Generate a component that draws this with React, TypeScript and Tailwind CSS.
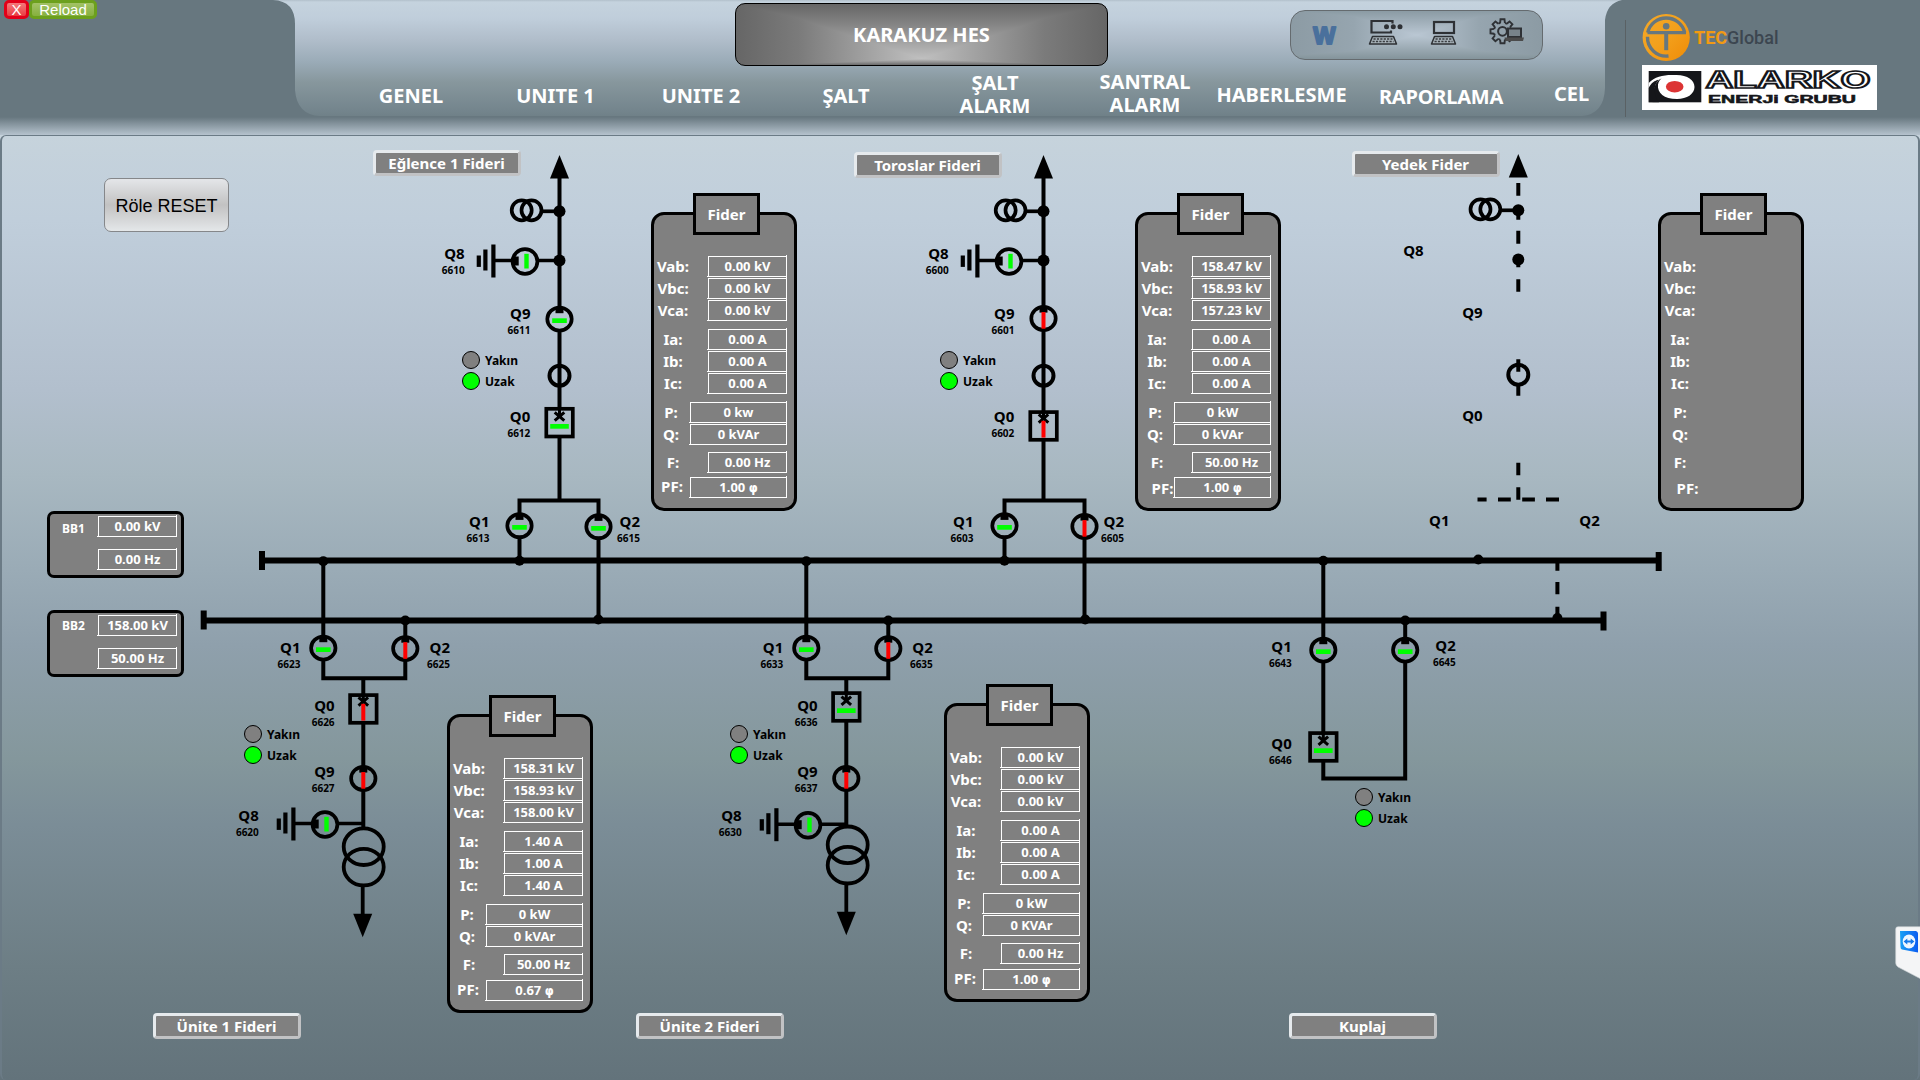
import React from "react";

const NOTO = "font-['Noto_Sans','DejaVu_Sans',sans-serif]";

/* ---------- Header ---------- */

const navItems = [
  { text: ["GENEL"], cls: "ml-[85.5px] w-[100px] mt-[84px]" },
  { text: ["UNITE 1"], cls: "ml-[44.5px] w-[100px] mt-[84px]" },
  { text: ["UNITE 2"], cls: "ml-[45.5px] w-[100px] mt-[84px]" },
  { text: ["ŞALT"], cls: "ml-[45px] w-[100px] mt-[84px]" },
  { text: ["ŞALT", "ALARM"], cls: "ml-[49px] w-[100px] mt-[71px]" },
  { text: ["SANTRAL", "ALARM"], cls: "ml-[50px] w-[100px] mt-[70px]" },
  { text: ["HABERLESME"], cls: "ml-[16.5px] w-[140px] mt-[83px]" },
  { text: ["RAPORLAMA"], cls: "ml-[19.5px] w-[140px] mt-[85px] tracking-[-0.2px]" },
  { text: ["CEL"], cls: "ml-[30.5px] w-[60px] mt-[82px]" },
];

function Keyboard({ x, y, w }: { x: number; y: number; w: number }) {
  return (
    <g>
      <path
        d={`M${x + 3} ${y} H${x + w - 3} L${x + w} ${y + 7.5} H${x} Z`}
        fill="#a9b4bb"
        stroke="#2e3135"
        strokeWidth="1.5"
        strokeLinejoin="round"
      />
      <path
        d={`M${x + 4} ${y + 2.5} H${x + w - 4} M${x + 3} ${y + 5} H${x + w - 3}`}
        stroke="#3a3d41"
        strokeWidth="1.3"
        strokeDasharray="2.2 1.2"
      />
    </g>
  );
}

function ToolbarIcons() {
  const teeth = [0, 45, 90, 135, 180, 225, 270, 315];
  return (
    <svg className="h-[50px] w-[252px]" viewBox="1291 11 252 50">
      <text
        x="1324.4"
        y="43.5"
        textAnchor="middle"
        fontFamily="Liberation Sans, sans-serif"
        fontWeight="700"
        fontSize="23.5"
        fill="#4a709c"
        stroke="#4a709c"
        strokeWidth="2"
        strokeLinejoin="round"
      >
        W
      </text>
      <path d="M1392.5 23.5 V21 H1371.5 V32.5 H1391 V30.5" fill="none" stroke="#2e3135" strokeWidth="2.2" />
      <g fill="#2e3135">
        <circle cx="1386.5" cy="26.8" r="2.5" />
        <circle cx="1393.3" cy="26.8" r="2.5" />
        <circle cx="1400" cy="26.8" r="2.5" />
      </g>
      <Keyboard x={1369.5} y={36.5} w={27} />
      <rect x="1434" y="22" width="20" height="11" fill="none" stroke="#2e3135" strokeWidth="2.2" />
      <Keyboard x={1431.5} y={36.5} w={24} />
      <g transform="translate(1502.5 31.3)">
        {teeth.map((a) => (
          <path key={a} d="M-2.4 -8.3 L-2 -12 H2 L2.4 -8.3" transform={`rotate(${a})`} fill="none" stroke="#2e3135" strokeWidth="1.9" />
        ))}
        <circle r="8.6" fill="none" stroke="#2e3135" strokeWidth="1.9" strokeDasharray="2.2 4.554" strokeDashoffset="-2.277" />
        <circle r="4.4" fill="none" stroke="#2e3135" strokeWidth="2" />
      </g>
      <rect x="1508" y="28.5" width="13" height="8.5" fill="#78838a" stroke="#2e3135" strokeWidth="2" />
      <path d="M1504.5 37.5 H1524 L1523 41 H1506 Z" fill="#4b4b4b" />
    </svg>
  );
}

function TecLogo() {
  return (
    <div className="flex h-[49px] items-center">
      <svg className="h-[49px] w-[49px] shrink-0" viewBox="1641.5 12.8 49 49">
        <defs>
          <linearGradient id="tec" x1="0" y1="0" x2="1" y2="1">
            <stop offset="0" stopColor="#f4a828" />
            <stop offset="0.5" stopColor="#f3a01c" />
            <stop offset="1" stopColor="#ef8b06" />
          </linearGradient>
        </defs>
        <circle cx="1665.7" cy="37.3" r="23.6" fill="url(#tec)" />
        <g fill="none" stroke="#67777f" strokeWidth="3.4">
          <path d="M1647.2 32.4 A19 19 0 0 1 1684.2 32.4" />
          <path d="M1647 36.5 A18.8 18.8 0 0 0 1668 55.8" />
          <path d="M1647 32.4 H1685.5" />
          <path d="M1665.7 32.4 V50" strokeWidth="4" />
        </g>
        <circle cx="1665.7" cy="26" r="3.3" fill="#67777f" />
      </svg>
      <div className="ml-[3px] font-['Roboto',sans-serif] text-[18px] leading-5 whitespace-nowrap">
        <span className="font-bold text-[#f29a13]">TEC</span>
        <span className="font-medium text-[#3c4650]">Global</span>
      </div>
    </div>
  );
}

function AlarkoLogo() {
  return (
    <svg className="h-[45px] w-[235px] bg-white" viewBox="1642 65 235 45">
      <rect x="1648.7" y="71" width="52.6" height="31.3" fill="#15161a" />
      <path
        d="M1648.7 83 C1655 76 1665 74.5 1675 75 C1687 74.5 1694.5 80 1694.5 87 C1694.5 94 1687 99 1677 99 C1664 99 1657 93 1658 84.5 C1658.5 81 1660.5 79 1662 78.2 C1656 80.5 1653 87 1652.5 102.3 L1648.7 102.3 Z"
        fill="#ffffff"
      />
      <path d="M1648.7 88 C1651 83 1655 80.5 1658.5 79.8 C1653.5 86 1653 94 1659 102.3 L1648.7 102.3 Z" fill="#15161a" />
      <ellipse cx="1674.7" cy="86.7" rx="8.8" ry="5.8" fill="#dc3434" />
      <text
        x="1705.5"
        y="87.8"
        textLength="165"
        lengthAdjust="spacingAndGlyphs"
        fontFamily="Liberation Sans, Arial, sans-serif"
        fontWeight="700"
        fontSize="23"
        fill="#ffffff"
        stroke="#15161a"
        strokeWidth="1.7"
      >
        ALARKO
      </text>
      <text
        x="1708"
        y="103.2"
        textLength="148"
        lengthAdjust="spacingAndGlyphs"
        fontFamily="Liberation Sans, Arial, sans-serif"
        fontWeight="700"
        fontSize="10"
        fill="#15161a"
        stroke="#15161a"
        strokeWidth="0.5"
      >
        ENERJi GRUBU
      </text>
    </svg>
  );
}

function Header() {
  return (
    <header className="relative h-[117px] w-full bg-[#67777f]">
      <div
        className={`absolute inset-0 bg-[linear-gradient(#b2c0cb_0px,#c5d3de_2px,#c0cedb_18px,#b0bdca_40px,#9aabb7_62px,#87979d_82px,#74858d_110px,#6f8087_117px)] [clip-path:path('M273_0_Q295_1_295_24_V90_Q297_115_320_116_H1582_Q1604_114_1605_88_V20_Q1607_3_1622_0_Z')]`}
      />
      <div className="relative flex h-full">
        <div className="flex h-[19px] w-[275px] shrink-0 pl-1 font-['Liberation_Sans',Arial,sans-serif] text-[15px] leading-[14px] text-white">
          <button className="h-[19px] w-[25px] rounded-[5px] border-[3px] border-[#e2001a] bg-linear-to-b from-[#f4777b] to-[#e93a42]">X</button>
          <button className="h-[19px] w-[68px] rounded-[5px] border-[3px] border-[#6ca01d] bg-linear-to-b from-[#a3c266] to-[#86b03d]">Reload</button>
        </div>
        <div className="relative w-[1330px] shrink-0">
          <nav className={`flex items-start text-center text-[20px] leading-[23px] font-bold text-white ${NOTO}`}>
            <span className="w-[0.5px] shrink-0" />
            {navItems.map((n, i) => (
              <div key={i} className={`shrink-0 whitespace-nowrap ${n.cls}`}>
                {n.text.map((t, k) => (
                  <div key={k}>{t}</div>
                ))}
              </div>
            ))}
          </nav>
          <div
            className={`absolute top-[3px] left-[460px] flex h-[63px] w-[373px] items-center justify-center rounded-[10px] border border-black bg-[linear-gradient(90deg,#666_0%,#7b7b7b_17%,#c0c0c0_50%,#7b7b7b_83%,#666_100%),linear-gradient(180deg,#666_0%,#868686_35%,#c0c0c0_90%,#6a6a6a_100%)] bg-blend-darken text-[20px] leading-[24px] font-bold text-white ${NOTO}`}
          >
            KARAKUZ HES
          </div>
          <div className="absolute top-[10px] left-[1015px] h-[50px] w-[253px] rounded-[15px] border border-[#656b6f] bg-[linear-gradient(90deg,#8c9ba4_0%,#96a5af_25%,#bac7d3_50%,#96a5af_75%,#8c9ba4_100%),linear-gradient(180deg,#8b9ba4_0%,#bac7d3_50%,#84949b_100%)] bg-blend-darken">
            <ToolbarIcons />
          </div>
        </div>
        <div className="mt-5 ml-5 flex-1 border-l border-[#5a6164]">
          <div className="-mt-[7px] ml-[16px] flex flex-col">
            <TecLogo />
            <div className="mt-[3px]">
              <AlarkoLogo />
            </div>
          </div>
        </div>
      </div>
    </header>
  );
}

/* ---------- Single line diagram symbols ---------- */

const GREEN = "#00ff00";
const RED = "#ff0000";

function Disconnector({ x, y, closed }: { x: number; y: number; closed?: boolean }) {
  return (
    <g>
      <ellipse cx={x} cy={y} rx="12.2" ry="11.5" fill="none" stroke="#000" strokeWidth="3.7" />
      <rect x={x - 4} y={y - 11} width="8" height="5.2" />
      {closed ? (
        <rect x={x - 2} y={y - 6.3} width="4" height="16.6" fill={RED} />
      ) : (
        <rect x={x - 7.3} y={y - 0.7} width="14.6" height="4.7" fill={GREEN} />
      )}
    </g>
  );
}

function Breaker({ x, top, closed }: { x: number; top: number; closed?: boolean }) {
  const cy = top + (closed ? 8 : 9.3);
  return (
    <g>
      <rect x={x - 13.2} y={top + 1.8} width="26.5" height="27.7" fill="none" stroke="#000" strokeWidth="3.7" />
      <path
        d={`M${x - 4.8} ${cy - 4} L${x + 4.8} ${cy + 4.3} M${x + 4.8} ${cy - 4} L${x - 4.8} ${cy + 4.3} M${x} ${top} V${cy + 1}`}
        stroke="#000"
        strokeWidth="3"
      />
      {closed ? (
        <rect x={x - 2} y={top + 10.5} width="4" height="16.8" fill={RED} />
      ) : (
        <rect x={x - 9.3} y={top + 17} width="18.6" height="4.7" fill={GREEN} />
      )}
    </g>
  );
}

/* Earthing switch: ground bars, link and round indicator */
function Earthing({ x, y, link = 20 }: { x: number; y: number; link?: number }) {
  return (
    <g transform={`translate(${x} ${y})`}>
      <rect x="-33.7" y="-17" width="4.2" height="33" />
      <rect x="-41.7" y="-12" width="4.2" height="21" />
      <rect x="-48.3" y="-6" width="4.2" height="11.4" />
      <path d={`M-30 -1 H-13 M14 -1 H${14 + link}`} stroke="#000" strokeWidth="3.5" />
      <circle r="12.4" fill="none" stroke="#000" strokeWidth="3.7" />
      <rect x="-12" y="-5" width="5.7" height="9" />
      <rect x="-0.7" y="-7.7" width="4.4" height="14.7" fill={GREEN} />
    </g>
  );
}

function VoltageTransformer({ x, y }: { x: number; y: number }) {
  return (
    <g fill="none" stroke="#000" strokeWidth="3.7">
      <circle cx={x - 37.8} cy={y - 1} r="10" />
      <circle cx={x - 28} cy={y - 1} r="10" />
      <path d={`M${x - 17} ${y} H${x}`} />
      <circle cx={x} cy={y} r="6" fill="#000" stroke="none" />
    </g>
  );
}

function PowerTransformer({ x, y, lx }: { x: number; y: number; lx: number }) {
  return (
    <g>
      <g fill="none" stroke="#000" strokeWidth="3.8">
        <ellipse cx={x} cy={y} rx="20" ry="18.3" />
        <ellipse cx={x} cy={y + 20.4} rx="20" ry="18.3" />
        <path d={`M${lx} ${y + 40} V${y + 68}`} />
      </g>
      <path d={`M${lx - 9.5} ${y + 67} H${lx + 9.5} L${lx} ${y + 90.5} Z`} />
    </g>
  );
}

function ArrowUp({ x, y }: { x: number; y: number }) {
  return <path d={`M${x} ${y} L${x + 9.5} ${y + 23.5} H${x - 9.5} Z`} />;
}

function Tag({ x, y, q, n }: { x: number; y: number; q: string; n?: string }) {
  return (
    <g textAnchor="end" fontWeight="700">
      <text x={x} y={y} fontSize="15">
        {q}
      </text>
      {n && (
        <text x={x} y={y + 15.3} fontSize="10">
          {n}
        </text>
      )}
    </g>
  );
}

function Mode({ x, y }: { x: number; y: number }) {
  return (
    <g fontSize="12" fontWeight="700">
      <circle cx={x} cy={y} r="8.5" fill="#808080" stroke="#000" />
      <circle cx={x} cy={y + 21} r="8.5" fill={GREEN} stroke="#000" />
      <text x={x + 14} y={y + 5.2}>
        Yakın
      </text>
      <text x={x + 14} y={y + 26}>
        Uzak
      </text>
    </g>
  );
}

const dots: [number, number, number][] = [
  [559.5, 260.5, 6],
  [1043.5, 260.5, 6],
  [1518.3, 259.5, 6],
  [519.5, 560.7, 5],
  [1004.5, 560.7, 5],
  [598.3, 619.5, 5],
  [1085.2, 619.5, 5],
  [323.3, 561.3, 5],
  [806.3, 561.3, 5],
  [1323.3, 560.7, 5],
  [1478.3, 559.5, 5],
  [405.3, 620.5, 5],
  [888.3, 620.5, 5],
  [1405.2, 620.5, 5],
  [1557.4, 618, 5],
];

const tags: [number, number, string, string?][] = [
  [464.7, 259, "Q8", "6610"],
  [530.5, 319, "Q9", "6611"],
  [530.3, 422, "Q0", "6612"],
  [489.5, 527, "Q1", "6613"],
  [640, 527, "Q2", "6615"],
  [948.7, 259, "Q8", "6600"],
  [1014.5, 319, "Q9", "6601"],
  [1014.3, 422, "Q0", "6602"],
  [973.5, 527, "Q1", "6603"],
  [1124, 527, "Q2", "6605"],
  [1423.6, 256, "Q8"],
  [1482.6, 318, "Q9"],
  [1482.6, 421, "Q0"],
  [1449.5, 526, "Q1"],
  [1599.8, 526, "Q2"],
  [300.5, 652.6, "Q1", "6623"],
  [450, 652.6, "Q2", "6625"],
  [334.6, 711, "Q0", "6626"],
  [334.6, 777, "Q9", "6627"],
  [258.8, 821, "Q8", "6620"],
  [783.3, 652.6, "Q1", "6633"],
  [932.8, 652.6, "Q2", "6635"],
  [817.6, 711, "Q0", "6636"],
  [817.6, 777, "Q9", "6637"],
  [741.7, 821, "Q8", "6630"],
  [1291.8, 651.6, "Q1", "6643"],
  [1455.8, 651, "Q2", "6645"],
  [1291.8, 749, "Q0", "6646"],
];

function Diagram() {
  return (
    <svg
      className="absolute top-0 left-0 h-[944px] w-[1920px]"
      viewBox="0 136 1920 944"
      fontFamily="Noto Sans, DejaVu Sans, sans-serif"
    >
      {/* bus bars */}
      <g>
        <rect x="259" y="551" width="6" height="19" />
        <rect x="264" y="557.5" width="1392" height="6" />
        <rect x="1655.7" y="552" width="6" height="19" />
        <rect x="200.7" y="610.5" width="6" height="19" />
        <rect x="206" y="617.5" width="1396" height="6" />
        <rect x="1600.5" y="611.5" width="6" height="19" />
      </g>

      {/* wires */}
      <g fill="none" stroke="#000" strokeWidth="4">
        <path d="M559.5 177 V306 M559.5 332 V408 M559.5 438 V500.5 M519.5 514 V500.5 H598.5 V514 M519.5 539 V560 M598.5 540 V620" />
        <path d="M1043.5 177 V306 M1043.5 331 V411 M1043.5 441 V500.5 M1004.5 514 V500.5 H1084.5 V514 M1004.5 539 V560 M1084.5 539 V620" />
        <path d="M323.3 561 V636 M405.3 620 V636 M323.3 661 V678.3 H405.3 V661 M363.3 678 V694 M363.3 724 V766 M363.3 791 V828" />
        <path d="M806.3 561 V636 M888.3 620 V636 M806.3 661 V678.3 H888.3 V661 M846.3 678 V693 M846.3 722 V766 M846.3 791 V826" />
        <path d="M1323.3 561 V638 M1405.2 620 V638 M1323.3 663 V732 M1323.3 762 V778.5 H1405.2 V663" />
        <path d="M1518.3 183 V195.7 M1518.3 206 V219.7 M1518.3 230.7 V243.7 M1518.3 257 V267.3 M1518.3 279.3 V291.7 M1518.3 359.3 V371.7 M1518.3 385 V395.7 M1518.3 462.7 V475.3 M1518.3 487.3 V499.7 M1477.5 499.4 H1486.6 M1498 499.4 H1510.8 M1522.2 499.4 H1534.9 M1546 499.4 H1559 M1557.4 563 V570.7 M1557.4 582 V594.3 M1557.4 606.7 V618" />
        <circle cx="559.5" cy="375.7" r="10" />
        <circle cx="1043.5" cy="375.7" r="10" />
        <circle cx="1518.3" cy="374.7" r="10" />
      </g>

      {dots.map(([x, y, r], i) => (
        <circle key={i} cx={x} cy={y} r={r} />
      ))}

      <ArrowUp x={559.5} y={155} />
      <ArrowUp x={1043.5} y={155} />
      <ArrowUp x={1518.3} y={154} />
      <VoltageTransformer x={559.5} y={211.3} />
      <VoltageTransformer x={1043.5} y={211.3} />
      <VoltageTransformer x={1518.3} y={210.3} />
      <Earthing x={525} y={261.5} />
      <Earthing x={1009} y={261.5} />
      <Earthing x={325} y={824.5} link={24} />
      <Earthing x={808} y={825.2} link={24} />

      <Disconnector x={559.5} y={319} />
      <Disconnector x={519.5} y={525.7} />
      <Disconnector x={598.5} y={526.7} />
      <Disconnector x={1043.5} y={318.4} closed />
      <Disconnector x={1004.5} y={525.7} />
      <Disconnector x={1084.5} y={526.4} closed />
      <Disconnector x={323.3} y={648} />
      <Disconnector x={405.3} y={648.5} closed />
      <Disconnector x={363.3} y={778.4} closed />
      <Disconnector x={806.3} y={648} />
      <Disconnector x={888.3} y={648.5} closed />
      <Disconnector x={846.3} y={778.4} closed />
      <Disconnector x={1323.3} y={650} />
      <Disconnector x={1405.2} y={650} />

      <Breaker x={559.5} top={407} />
      <Breaker x={1043.5} top={410.3} closed />
      <Breaker x={363.3} top={693.3} closed />
      <Breaker x={846.3} top={691.3} />
      <Breaker x={1323.3} top={731.3} />

      <PowerTransformer x={363.7} y={846.7} lx={362.7} />
      <PowerTransformer x={847.7} y={844.8} lx={846.3} />

      {tags.map(([x, y, q, n], i) => (
        <Tag key={i} x={x} y={y} q={q} n={n} />
      ))}
      <Mode x={471} y={360} />
      <Mode x={949} y={360} />
      <Mode x={253} y={734} />
      <Mode x={739} y={734} />
      <Mode x={1364} y={797} />
    </svg>
  );
}

/* ---------- Measurement panels ---------- */

function Field({ value, wide }: { value: string; wide?: boolean }) {
  const isPhi = value.endsWith("φ");
  return (
    <div className={`relative h-[22px] shrink-0 border-r border-b border-white bg-[#808080] pt-px pl-px ${wide ? "w-[98px]" : "w-[80px]"}`}>
      <div className="h-full border-t border-l border-white text-center text-[13px] leading-[18px] font-bold whitespace-nowrap">
        {isPhi ? (
          <>
            {value.slice(0, -1)}
            <span className="font-['DejaVu_Sans',sans-serif] text-[11.5px] leading-none">φ</span>
          </>
        ) : (
          value
        )}
      </div>
    </div>
  );
}

const rowDefs = [
  { label: "Vab:", gap: "" },
  { label: "Vbc:", gap: "" },
  { label: "Vca:", gap: "" },
  { label: "Ia:", gap: "mt-[7px]" },
  { label: "Ib:", gap: "" },
  { label: "Ic:", gap: "" },
  { label: "P:", gap: "mt-[7px]", wide: true },
  { label: "Q:", gap: "", wide: true },
  { label: "F:", gap: "mt-[6px]" },
  { label: "PF:", gap: "mt-[3px]", wide: true },
];

function FeederPanel({ place, values, low, shift }: { place: string; values?: string[]; low?: boolean; shift?: boolean }) {
  return (
    <section className={`absolute h-[299px] w-[146px] rounded-[13px] border-[3px] border-black bg-[#808080] pt-10 pr-[7px] text-white ${place}`}>
      <h2 className="absolute -top-[22px] left-[39px] h-[42px] w-[67px] border-[3px] border-black bg-[#808080] text-center text-[15px] leading-[37px] font-bold">Fider</h2>
      {rowDefs.map((r, i) => (
        <div key={r.label} className={`flex h-[22px] justify-between ${i === 9 && low ? "mt-1" : r.gap}`}>
          <div
            className={`-ml-px w-10 text-center text-[15px] leading-[22px] font-bold whitespace-nowrap ${
              i === 9 ? (shift ? "translate-x-[7.5px] translate-y-px" : "translate-x-px -translate-y-px") : ""
            }`}
          >
            {r.label}
          </div>
          {values && <Field value={values[i]} wide={r.wide} />}
        </div>
      ))}
    </section>
  );
}

function BusPanel({ place, name, nameTop, volt, freq }: { place: string; name: string; nameTop: string; volt: string; freq: string }) {
  return (
    <section className={`absolute flex h-[67px] w-[137px] justify-between rounded-[7px] border-[3px] border-black bg-[#808080] pt-px pr-[4px] pl-[12px] text-white ${place}`}>
      <div className={`text-[12px] leading-[18px] font-bold ${nameTop}`}>{name}</div>
      <div className="flex flex-col gap-[11px]">
        <Field value={volt} />
        <Field value={freq} />
      </div>
    </section>
  );
}

function Title({ place, children }: { place: string; children: React.ReactNode }) {
  return (
    <div
      className={`absolute h-[26px] w-[148px] rounded-[4px] border-[3px] border-t-[#e6eaed] border-r-[#c1c2c4] border-b-[#c1c2c4] border-l-[#e6eaed] bg-[#808080] pr-px text-center text-[15px] leading-[20px] font-bold text-white ${place}`}
    >
      {children}
    </div>
  );
}

export default function App() {
  return (
    <div className="flex h-[1080px] w-[1920px] flex-col overflow-hidden bg-[#67777f]">
      <Header />
      <div className="h-[18px] bg-linear-to-b from-[#67777f] to-[#b6c3ce]" />
      <main
        className={`relative h-[945px] w-full overflow-hidden bg-[linear-gradient(180deg,#c6d3dc_0%,#c0cedb_9%,#b2bfcd_27%,#a8b8c1_36%,#9aabb6_46%,#8fa0ac_54%,#84979c_66%,#7b8d97_73%,#6d7e85_88%,#63737b_100%)] ${NOTO}`}
      >
        <div className="absolute inset-0 rounded-[6px] border-t border-r-2 border-l-2 border-[#6b7b86]" />
        <div className="absolute top-px left-0 h-[944px] w-[1920px]">
          <Diagram />

          <button className="absolute top-[42px] left-[104px] flex h-[54px] w-[125px] items-center justify-center rounded-[7px] border border-[#85878a] bg-linear-to-b from-[#e4e6e9] via-[#c2c2c2] to-[#e4e7e9] pt-[2px] font-['Liberation_Sans',Arial,sans-serif] text-[18px] whitespace-nowrap text-black">
            Röle RESET
          </button>

          <Title place="left-[373px] top-[14px]">Eğlence 1 Fideri</Title>
          <Title place="left-[854px] top-[16px]">Toroslar Fideri</Title>
          <Title place="left-[1352px] top-[15px]">Yedek Fider</Title>
          <Title place="left-[153px] top-[877px]">Ünite 1 Fideri</Title>
          <Title place="left-[636px] top-[877px]">Ünite 2 Fideri</Title>
          <Title place="left-[1289px] top-[877px]">Kuplaj</Title>

          <BusPanel place="left-[47px] top-[375px]" name="BB1" nameTop="mt-[5px]" volt="0.00 kV" freq="0.00 Hz" />
          <BusPanel place="left-[47px] top-[474px]" name="BB2" nameTop="mt-[3px]" volt="158.00 kV" freq="50.00 Hz" />

          <FeederPanel
            place="left-[651px] top-[76px]"
            values={["0.00 kV", "0.00 kV", "0.00 kV", "0.00 A", "0.00 A", "0.00 A", "0 kw", "0 kVAr", "0.00 Hz", "1.00 φ"]}
          />
          <FeederPanel
            place="left-[1135px] top-[76px]"
            shift
            values={["158.47 kV", "158.93 kV", "157.23 kV", "0.00 A", "0.00 A", "0.00 A", "0 kW", "0 kVAr", "50.00 Hz", "1.00 φ"]}
          />
          <FeederPanel place="left-[1658px] top-[76px]" shift />
          <FeederPanel
            place="left-[447px] top-[578px]"
            low
            values={["158.31 kV", "158.93 kV", "158.00 kV", "1.40 A", "1.00 A", "1.40 A", "0 kW", "0 kVAr", "50.00 Hz", "0.67 φ"]}
          />
          <FeederPanel
            place="left-[944px] top-[567px]"
            low
            values={["0.00 kV", "0.00 kV", "0.00 kV", "0.00 A", "0.00 A", "0.00 A", "0 kW", "0 KVAr", "0.00 Hz", "1.00 φ"]}
          />

          {/* remote support side tab */}
          <svg className="absolute top-[790px] left-[1895px] h-[54px] w-[25px]" viewBox="1895 926 25 54">
            <defs>
              <linearGradient id="tv" x1="0" y1="0" x2="1" y2="0">
                <stop offset="0" stopColor="#1aa0f5" />
                <stop offset="1" stopColor="#0a5cf0" />
              </linearGradient>
            </defs>
            <path d="M1921 926.7 H1898 Q1895.7 926.7 1895.7 929 V963 Q1895.7 965.5 1898 967 L1921 979 Z" fill="#f4f5f6" stroke="#c9ced1" strokeWidth="0.6" />
            <path d="M1900 931 H1916 Q1918 931.5 1918 933.5 V952.5 L1902 949.5 Q1900.5 949 1900.5 947 Z" fill="url(#tv)" />
            <ellipse cx="1909" cy="941.5" rx="6.3" ry="7" fill="#eef6ff" />
            <path d="M1903.6 941.5 L1907.3 938.6 V940.6 H1910.7 V938.6 L1914.4 941.5 L1910.7 944.4 V942.4 H1907.3 V944.4 Z" fill="#1478e8" />
          </svg>
        </div>
      </main>
    </div>
  );
}
